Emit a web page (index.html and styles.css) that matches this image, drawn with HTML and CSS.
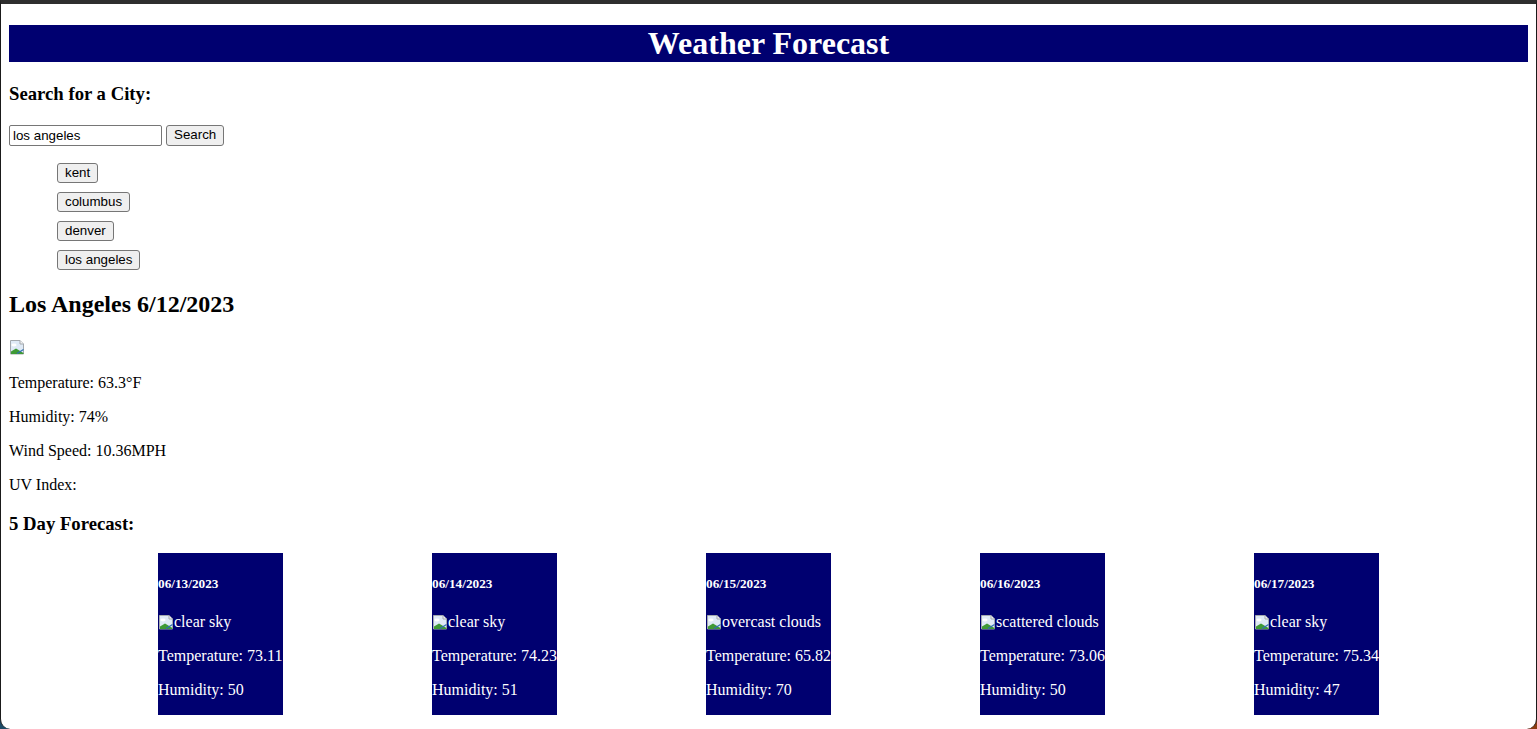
FILE: index.html
```html
<!DOCTYPE html>
<html lang="en">
<head>
<meta charset="utf-8">
<title>Weather Forecast</title>
<link rel="stylesheet" href="styles.css">
</head>
<body>
<div class="window">
  <h1 class="title">Weather Forecast</h1>
  <h3 class="label label-search">Search for a City:</h3>
  <form class="search">
    <input class="search-input" type="text" value="los angeles">
    <button class="btn btn-search" type="button">Search</button>
  </form>
  <ul class="history">
    <li><button class="btn" type="button">kent</button></li>
    <li><button class="btn" type="button">columbus</button></li>
    <li><button class="btn" type="button">denver</button></li>
    <li><button class="btn" type="button">los angeles</button></li>
  </ul>
  <h2 class="city">Los Angeles 6/12/2023</h2>
  <div class="icon-line"><svg class="broken" width="16" height="16" viewBox="0 0 16 16"><path d="M1.5 1.5h9.5l3.5 3.5v10h-13z" fill="#dfeaf6" stroke="#a4a9ae"/><path d="M11 1.5v3.5h3.5" fill="#f4f4f4" stroke="#a4a9ae"/><ellipse cx="5" cy="6" rx="2.6" ry="1.4" fill="#fff"/><path d="M2 12.5l5-3 7.5 4.5v1h-12.5z" fill="#3f9a35"/><path d="M8 14.5l6.5-4" stroke="#2f6fb3" stroke-width="1.2"/></svg></div>
  <p>Temperature: 63.3°F</p>
  <p>Humidity: 74%</p>
  <p>Wind Speed: 10.36MPH</p>
  <p>UV Index: </p>
  <h3 class="label">5 Day Forecast:</h3>
  <div class="forecast">
    <div class="card">
      <h5 class="date">06/13/2023</h5>
      <div class="alt"><svg class="broken" width="16" height="16" viewBox="0 0 16 16"><path d="M1.5 1.5h9.5l3.5 3.5v10h-13z" fill="#dfeaf6" stroke="#a4a9ae"/><path d="M11 1.5v3.5h3.5" fill="#f4f4f4" stroke="#a4a9ae"/><ellipse cx="5" cy="6" rx="2.6" ry="1.4" fill="#fff"/><path d="M2 12.5l5-3 7.5 4.5v1h-12.5z" fill="#3f9a35"/><path d="M8 14.5l6.5-4" stroke="#2f6fb3" stroke-width="1.2"/></svg>clear sky</div>
      <p>Temperature: 73.11</p>
      <p>Humidity: 50</p>
    </div>
    <div class="card">
      <h5 class="date">06/14/2023</h5>
      <div class="alt"><svg class="broken" width="16" height="16" viewBox="0 0 16 16"><path d="M1.5 1.5h9.5l3.5 3.5v10h-13z" fill="#dfeaf6" stroke="#a4a9ae"/><path d="M11 1.5v3.5h3.5" fill="#f4f4f4" stroke="#a4a9ae"/><ellipse cx="5" cy="6" rx="2.6" ry="1.4" fill="#fff"/><path d="M2 12.5l5-3 7.5 4.5v1h-12.5z" fill="#3f9a35"/><path d="M8 14.5l6.5-4" stroke="#2f6fb3" stroke-width="1.2"/></svg>clear sky</div>
      <p>Temperature: 74.23</p>
      <p>Humidity: 51</p>
    </div>
    <div class="card">
      <h5 class="date">06/15/2023</h5>
      <div class="alt"><svg class="broken" width="16" height="16" viewBox="0 0 16 16"><path d="M1.5 1.5h9.5l3.5 3.5v10h-13z" fill="#dfeaf6" stroke="#a4a9ae"/><path d="M11 1.5v3.5h3.5" fill="#f4f4f4" stroke="#a4a9ae"/><ellipse cx="5" cy="6" rx="2.6" ry="1.4" fill="#fff"/><path d="M2 12.5l5-3 7.5 4.5v1h-12.5z" fill="#3f9a35"/><path d="M8 14.5l6.5-4" stroke="#2f6fb3" stroke-width="1.2"/></svg>overcast clouds</div>
      <p>Temperature: 65.82</p>
      <p>Humidity: 70</p>
    </div>
    <div class="card">
      <h5 class="date">06/16/2023</h5>
      <div class="alt"><svg class="broken" width="16" height="16" viewBox="0 0 16 16"><path d="M1.5 1.5h9.5l3.5 3.5v10h-13z" fill="#dfeaf6" stroke="#a4a9ae"/><path d="M11 1.5v3.5h3.5" fill="#f4f4f4" stroke="#a4a9ae"/><ellipse cx="5" cy="6" rx="2.6" ry="1.4" fill="#fff"/><path d="M2 12.5l5-3 7.5 4.5v1h-12.5z" fill="#3f9a35"/><path d="M8 14.5l6.5-4" stroke="#2f6fb3" stroke-width="1.2"/></svg>scattered clouds</div>
      <p>Temperature: 73.06</p>
      <p>Humidity: 50</p>
    </div>
    <div class="card">
      <h5 class="date">06/17/2023</h5>
      <div class="alt"><svg class="broken" width="16" height="16" viewBox="0 0 16 16"><path d="M1.5 1.5h9.5l3.5 3.5v10h-13z" fill="#dfeaf6" stroke="#a4a9ae"/><path d="M11 1.5v3.5h3.5" fill="#f4f4f4" stroke="#a4a9ae"/><ellipse cx="5" cy="6" rx="2.6" ry="1.4" fill="#fff"/><path d="M2 12.5l5-3 7.5 4.5v1h-12.5z" fill="#3f9a35"/><path d="M8 14.5l6.5-4" stroke="#2f6fb3" stroke-width="1.2"/></svg>clear sky</div>
      <p>Temperature: 75.34</p>
      <p>Humidity: 47</p>
    </div>
  </div>
</div>
</body>
</html>
```

FILE: styles.css
```css
html {
  background: linear-gradient(90deg, #1d4a66 0%, #1a2f45 50%, #8a3a10 100%);
}
body {
  margin: 0;
  font-family: "Liberation Serif", "Times New Roman", serif;
  font-size: 16px;
  color: #000;
}
.window {
  box-sizing: border-box;
  height: 729px;
  overflow: hidden;
  background: #fff;
  border-top: 4px solid #2e2e2e;
  border-left: 1px solid #1a1a1a;
  border-right: 1px solid #1a1a1a;
  border-radius: 0 0 10px 10px;
  padding: 0 8px;
}
.title {
  margin: 21px 0 21.44px;
  background: #000070;
  color: #fff;
  text-align: center;
  font-size: 32px;
  font-weight: bold;
  line-height: 37px;
}
.label {
  font-size: 18.72px;
  margin: 18.72px 0;
  line-height: 21.5px;
}
.label-search {
  margin-bottom: 19.8px;
}
.search {
  display: flex;
  align-items: center;
  gap: 4px;
  margin: 0;
}
.search-input {
  box-sizing: border-box;
  width: 153px;
  height: 21px;
  margin: 0;
  padding: 1px 3px;
  border: 1px solid #767676;
  border-radius: 2px;
  font-family: "Liberation Sans", Arial, sans-serif;
  font-size: 13.33px;
  color: #000;
}
.btn {
  box-sizing: border-box;
  height: 20px;
  margin: 0;
  padding: 0 7px;
  background: #efefef;
  border: 1px solid #767676;
  border-radius: 3px;
  font-family: "Liberation Sans", Arial, sans-serif;
  font-size: 13.33px;
  line-height: 16px;
  color: #000;
}
.btn-search {
  height: 21px;
  padding: 0 7px;
}
.history {
  list-style: none;
  margin: 17px 0 0;
  padding: 0 0 0 48px;
  display: flex;
  flex-direction: column;
  align-items: flex-start;
  gap: 9px;
}
.history li {
  display: flex;
}
.city {
  font-size: 24px;
  line-height: 27.6px;
  margin: 21px 0 19.92px;
}
.icon-line {
  height: 20px;
}
.broken {
  display: inline-block;
  vertical-align: -3px;
}
p {
  margin: 16px 0;
  line-height: 18px;
}
.forecast {
  display: flex;
  justify-content: space-evenly;
  margin-top: 19px;
}
.card {
  width: 125px;
  background: #000070;
  color: #fff;
  white-space: nowrap;
  display: flow-root;
}
.date {
  font-size: 13.28px;
  line-height: 15px;
  margin: 22.18px 0;
}
.alt {
  line-height: 18px;
}
```
